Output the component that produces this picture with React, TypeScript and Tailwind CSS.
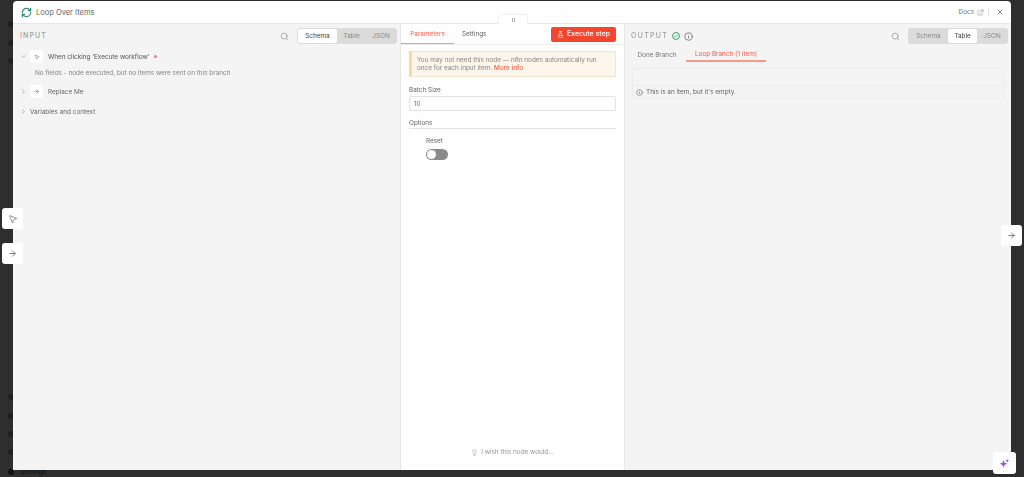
import { ArrowRight, Check, ChevronDown, ChevronRight, ExternalLink, FlaskConical, Info, Lightbulb, MousePointer2, RefreshCw, Search, X } from 'lucide-react';

function ViewTabs({ active }: { active: string }) {
  const tabs = [
    { name: 'Schema', width: 'w-[39px]' },
    { name: 'Table', width: 'w-[29px]' },
    { name: 'JSON', width: 'w-[30px]' },
  ];
  return (
    <div className="flex h-[16px] w-[100px] items-center rounded-[3px] bg-[#dcdcdc] px-[1px]">
      {tabs.map((tab) => (
        <div
          key={tab.name}
          className={`flex h-[14px] items-center justify-center rounded-[2px] ${tab.width} ${tab.name === active ? 'bg-white text-[#444]' : 'text-[#8a8a8a]'}`}
        >
          {tab.name}
        </div>
      ))}
    </div>
  );
}

function NodeIcon({ children }: { children: React.ReactNode }) {
  return <div className="flex h-[13px] w-[13px] items-center justify-center rounded-[2px] bg-white text-[#777]">{children}</div>;
}

function SideButton({ children }: { children: React.ReactNode }) {
  return <div className="flex h-[21px] w-[21px] items-center justify-center rounded-[3px] bg-white text-[#555]">{children}</div>;
}

function InputPanel() {
  return (
    <div className="flex w-[387px] flex-col bg-[#f5f5f5] text-[6.4px] leading-[10px] text-[#666]">
      <div className="flex h-[24px] items-center justify-between pl-[7px] pr-[3px]">
        <span className="text-[7px] font-medium tracking-[1.1px] text-[#a0a0a0]">INPUT</span>
        <div className="flex items-center gap-[8px]">
          <Search size={9} className="text-[#999]" />
          <ViewTabs active="Schema" />
        </div>
      </div>
      <div className="mt-[2px] flex h-[13px] items-center pl-[7px]">
        <ChevronDown size={7} className="text-[#888]" />
        <div className="ml-[3px]">
          <NodeIcon><MousePointer2 size={6} /></NodeIcon>
        </div>
        <span className="ml-[5px] text-[#555]">When clicking ‘Execute workflow’</span>
        <span className="ml-[5px] h-[3px] w-[3px] rounded-full bg-[#f0788a]" />
      </div>
      <div className="mt-[5px] pl-[22px] text-[#888]">No fields - node executed, but no items were sent on this branch</div>
      <div className="mt-[7px] flex h-[13px] items-center pl-[7px]">
        <ChevronRight size={7} className="text-[#888]" />
        <div className="ml-[3px]">
          <NodeIcon><ArrowRight size={7} /></NodeIcon>
        </div>
        <span className="ml-[5px] text-[#666]">Replace Me</span>
      </div>
      <div className="mt-[7px] flex h-[13px] items-center pl-[7px]">
        <ChevronRight size={7} className="text-[#888]" />
        <span className="ml-[3px] text-[#666]">Variables and context</span>
      </div>
    </div>
  );
}

function ParametersPanel() {
  return (
    <div className="flex w-[225px] flex-col border-x border-[#e8e8e8] bg-white text-[6.4px] leading-[10px] text-[#666]">
      <div className="flex h-[21px] items-center justify-between border-b border-[#ececec] pr-[8px]">
        <div className="flex h-full items-center">
          <div className="flex h-full w-[53px] items-center justify-center border-b-[1.5px] border-[#f79a8c] text-[#f0604c]">Parameters</div>
          <div className="ml-[8px] text-[#666]">Settings</div>
        </div>
        <div className="flex h-[15px] w-[65px] items-center justify-center gap-[3px] rounded-[2px] bg-[#f5472f] text-[7px] font-medium text-white">
          <FlaskConical size={7} />
          <span>Execute step</span>
        </div>
      </div>
      <div className="flex flex-1 flex-col px-[8px]">
        <div className="mt-[6px] h-[26px] rounded-[1px] border border-[#f6e6cd] border-l-[3px] border-l-[#f6d9ab] bg-[#fdf6ec] pl-[5px] pt-[4px] leading-[8px] text-[#888]">
          You may not need this node — n8n nodes automatically run
          <br />
          once for each input item. <span className="font-medium text-[#f0604c]">More info</span>
        </div>
        <div className="mt-[8px]">Batch Size</div>
        <div className="mt-[1px] flex h-[15px] items-center rounded-[2px] border border-[#e4e4e4] pl-[4px] text-[#777]">10</div>
        <div className="mt-[7px] border-b border-[#e4e4e4]">Options</div>
        <div className="mt-[7px] pl-[17px]">
          <div>Reset</div>
          <div className="mt-[3px] flex h-[11px] w-[22px] items-center rounded-full bg-[#8c8c8c] pl-[1px]">
            <div className="h-[9px] w-[9px] rounded-full bg-white" />
          </div>
        </div>
        <div className="mb-[13px] mt-auto flex items-center justify-center gap-[3px] text-[#999]">
          <Lightbulb size={7} />
          <span>I wish this node would...</span>
        </div>
      </div>
    </div>
  );
}

function OutputPanel() {
  return (
    <div className="flex flex-1 flex-col bg-[#f5f5f5] text-[6.4px] leading-[10px] text-[#666]">
      <div className="flex h-[24px] items-center justify-between pl-[6px] pr-[3px]">
        <div className="flex items-center">
          <span className="text-[7px] font-medium tracking-[1.3px] text-[#a0a0a0]">OUTPUT</span>
          <div className="ml-[4px] flex h-[8px] w-[8px] items-center justify-center rounded-full border border-[#3fa66d] text-[#3fa66d]">
            <Check size={6} strokeWidth={3} />
          </div>
          <Info size={9} className="ml-[4px] text-[#666]" />
        </div>
        <div className="flex items-center gap-[8px]">
          <Search size={9} className="text-[#999]" />
          <ViewTabs active="Table" />
        </div>
      </div>
      <div className="flex h-[14px] items-stretch pl-[4px]">
        <div className="flex w-[56px] items-center justify-center text-[#777]">Done Branch</div>
        <div className="ml-[1px] flex w-[80px] items-center justify-center border-b-2 border-[#f79a8c] text-[#f0604c]">Loop Branch (1 item)</div>
      </div>
      <div className="ml-[7px] mr-[7px] mt-[6px] border border-[#ededed]">
        <div className="h-[17px] border-b border-[#ededed]" />
        <div className="flex h-[12px] items-center gap-[3px] pl-[3px]">
          <Info size={7} />
          <span>This is an item, but it's empty.</span>
        </div>
      </div>
    </div>
  );
}

export default function App() {
  const behindModal = ['top-[21px]', 'top-[40px]', 'top-[58px]', 'top-[394px]', 'top-[413px]', 'top-[431px]', 'top-[449px]'];

  return (
    <div className="relative h-[477px] w-[1024px] overflow-hidden bg-[#2e2e2e] font-['Inter',sans-serif]">
      {/* sidebar of the page behind the modal */}
      {behindModal.map((top) => (
        <span key={top} className={`absolute left-[8px] h-[6px] w-[6px] rounded-full bg-[#1f1f1f] ${top}`} />
      ))}
      <div className="absolute left-[8px] top-[467px] flex items-center gap-[6px] text-[7px] leading-[10px] text-[#111]">
        <span className="h-[6px] w-[6px] rounded-full bg-[#111]" />
        <span>Settings</span>
      </div>

      <div className="relative ml-[13px] flex h-[470px] w-[998px] flex-col pt-[1px]">
        <div className="flex h-full flex-col overflow-hidden rounded-t-[4px] bg-white opacity-[0.999]">
          <div className="flex h-[23px] shrink-0 items-center justify-between border-b border-[#e8e8e8] pl-[8px] pr-[7px] pt-[1px]">
            <div className="flex items-center gap-[4px]">
              <RefreshCw size={11} strokeWidth={2.6} className="text-[#2f8f7a]" />
              <span className="text-[7.5px] text-[#666]">Loop Over Items</span>
            </div>
            <div className="flex items-center text-[6.4px] text-[#777]">
              <span>Docs</span>
              <ExternalLink size={7} className="ml-[3px] text-[#999]" />
              <span className="ml-[4px] h-[8px] w-px bg-[#e4e4e4]" />
              <X size={8} className="ml-[7px] text-[#444]" />
            </div>
          </div>
          <div className="flex min-h-0 flex-1">
            <InputPanel />
            <ParametersPanel />
            <OutputPanel />
          </div>
        </div>
      </div>

      {/* drag handle above the middle panel */}
      <div className="absolute left-[498px] top-[14px] flex h-[10px] w-[30px] items-center justify-center gap-[1px] rounded-t-[2px] border-x border-t border-[#f0f0f0] bg-white">
        <span className="h-[4px] w-px bg-[#aaa]" />
        <span className="h-[4px] w-px bg-[#aaa]" />
      </div>

      <div className="absolute left-[2px] top-[208px]">
        <SideButton><MousePointer2 size={10} strokeWidth={1.5} /></SideButton>
      </div>
      <div className="absolute left-[2px] top-[243px]">
        <SideButton><ArrowRight size={9} /></SideButton>
      </div>
      <div className="absolute left-[1001px] top-[225px]">
        <SideButton><ArrowRight size={9} /></SideButton>
      </div>
      <div className="absolute left-[993px] top-[452px] flex h-[22px] w-[23px] items-center justify-center rounded-[3px] bg-white">
        <svg viewBox="0 0 16 16" className="h-[11px] w-[11px] fill-[#8b5cd6]">
          <path d="M6.5 3 L8 7 L12 8.5 L8 10 L6.5 14 L5 10 L1 8.5 L5 7 Z" />
          <path d="M12 1 L12.8 3.2 L15 4 L12.8 4.8 L12 7 L11.2 4.8 L9 4 L11.2 3.2 Z" />
        </svg>
      </div>
    </div>
  );
}
